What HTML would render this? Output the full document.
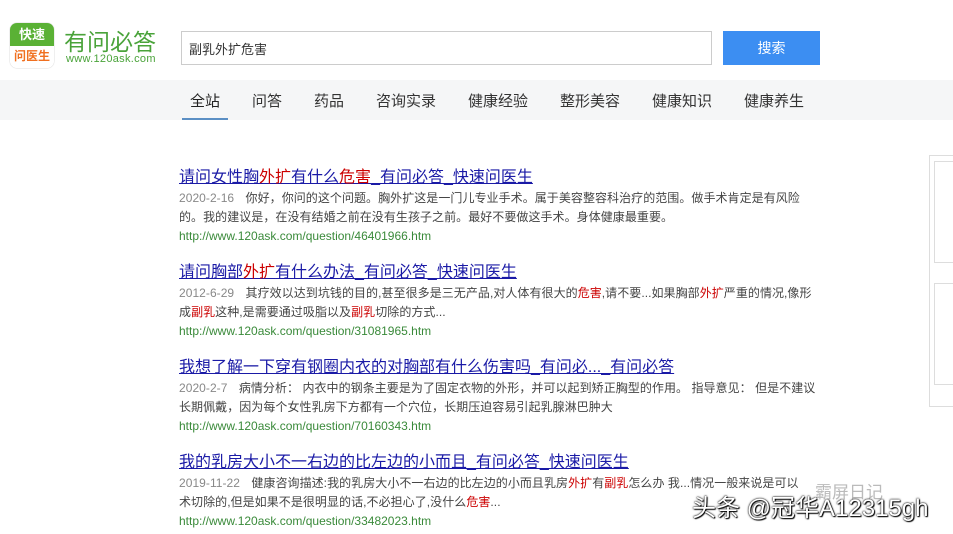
<!DOCTYPE html>
<html><head><meta charset="utf-8"><style>
body{margin:0;width:953px;height:534px;overflow:hidden;background:#fff;font-family:"Liberation Sans","Noto Sans CJK SC",sans-serif;position:relative}
.a{position:absolute}
.nav{left:0;top:80px;width:953px;height:40px;background:#f5f6f7}
.nav span{position:absolute;top:10px;font-size:15px;color:#333}
.r{position:absolute;left:179px;width:660px}
.r .t{font-size:16px;color:#1a1aa6;text-decoration:underline;line-height:20px;white-space:nowrap}
.r .d{font-size:12px;color:#444;line-height:19px;margin-top:1px;white-space:nowrap;letter-spacing:0.05px}
.r .d .dt{color:#888;margin-right:8px}
.r .u{font-size:12px;color:#3a8a3a;line-height:18px}
em{font-style:normal;color:#c00}
</style></head><body>
<div class="a" style="left:10px;top:23px;width:44px;height:45px;border-radius:7px;overflow:hidden;box-shadow:0 0 1px #999">
<div style="height:23px;background:#5ab135;color:#fff;font-size:13px;font-weight:bold;text-align:center;line-height:23px">快速</div>
<div style="height:22px;background:#fff;color:#f07020;font-size:12px;font-weight:bold;text-align:center;line-height:21px">问医生</div></div>
<div class="a" style="left:64px;top:23px;font-size:23px;color:#4aa33a">有问必答</div>
<div class="a" style="left:66px;top:53px;font-size:11px;color:#4aa33a;letter-spacing:0.3px">www.120ask.com</div>
<div class="a" style="left:181px;top:31px;width:529px;height:32px;border:1px solid #ccc"></div>
<div class="a" style="left:189px;top:39px;font-size:13px;color:#333">副乳外扩危害</div>
<div class="a" style="left:723px;top:31px;width:97px;height:34px;background:#3c8ef2;color:#fff;font-size:14px;text-align:center;line-height:34px">搜索</div>
<div class="a nav">
<span style="left:190px;color:#222">全站</span><span style="left:252px">问答</span><span style="left:314px">药品</span><span style="left:376px">咨询实录</span><span style="left:468px">健康经验</span><span style="left:560px">整形美容</span><span style="left:652px">健康知识</span><span style="left:744px">健康养生</span>
<div style="position:absolute;left:182px;top:38px;width:46px;height:2px;background:#5b8fc4"></div></div>
<div class="r" style="top:168px"><div class="t">请问女性胸<em>外扩</em>有什么<em>危害</em>_有问必答_快速问医生</div>
<div class="d"><span class="dt">2020-2-16</span> 你好，你问的这个问题。胸外扩这是一门儿专业手术。属于美容整容科治疗的范围。做手术肯定是有风险<br>的。我的建议是，在没有结婚之前在没有生孩子之前。最好不要做这手术。身体健康最重要。</div>
<div class="u">http://www.120ask.com/question/46401966.htm</div></div>
<div class="r" style="top:263px"><div class="t">请问胸部<em>外扩</em>有什么办法_有问必答_快速问医生</div>
<div class="d"><span class="dt">2012-6-29</span> 其疗效以达到坑钱的目的,甚至很多是三无产品,对人体有很大的<em>危害</em>,请不要...如果胸部<em>外扩</em>严重的情况,像形<br>成<em>副乳</em>这种,是需要通过吸脂以及<em>副乳</em>切除的方式...</div>
<div class="u">http://www.120ask.com/question/31081965.htm</div></div>
<div class="r" style="top:358px"><div class="t">我想了解一下穿有钢圈内衣的对胸部有什么伤害吗_有问必..._有问必答</div>
<div class="d"><span class="dt">2020-2-7</span> 病情分析： 内衣中的钢条主要是为了固定衣物的外形，并可以起到矫正胸型的作用。 指导意见： 但是不建议<br>长期佩戴，因为每个女性乳房下方都有一个穴位，长期压迫容易引起乳腺淋巴肿大</div>
<div class="u">http://www.120ask.com/question/70160343.htm</div></div>
<div class="r" style="top:453px"><div class="t">我的乳房大小不一右边的比左边的小而且_有问必答_快速问医生</div>
<div class="d"><span class="dt">2019-11-22</span> 健康咨询描述:我的乳房大小不一右边的比左边的小而且乳房<em>外扩</em>有<em>副乳</em>怎么办 我...情况一般来说是可以<br>术切除的,但是如果不是很明显的话,不必担心了,没什么<em>危害</em>...</div>
<div class="u">http://www.120ask.com/question/33482023.htm</div></div>
<div class="a" style="left:929px;top:155px;width:30px;height:250px;border:1px solid #ddd"></div>
<div class="a" style="left:934px;top:161px;width:30px;height:100px;border:1px solid #ddd"></div>
<div class="a" style="left:934px;top:283px;width:30px;height:100px;border:1px solid #ddd"></div>
<div class="a" style="left:815px;top:478px;font-size:17px;color:#bbb">霸屏日记</div>
<div class="a" style="left:692px;top:488px;font-size:24px;color:#fff;text-shadow:0 0 2px #000,0 0 1px #000,1px 1px 1px #000">头条 @冠华A12315gh</div>
</body></html>
